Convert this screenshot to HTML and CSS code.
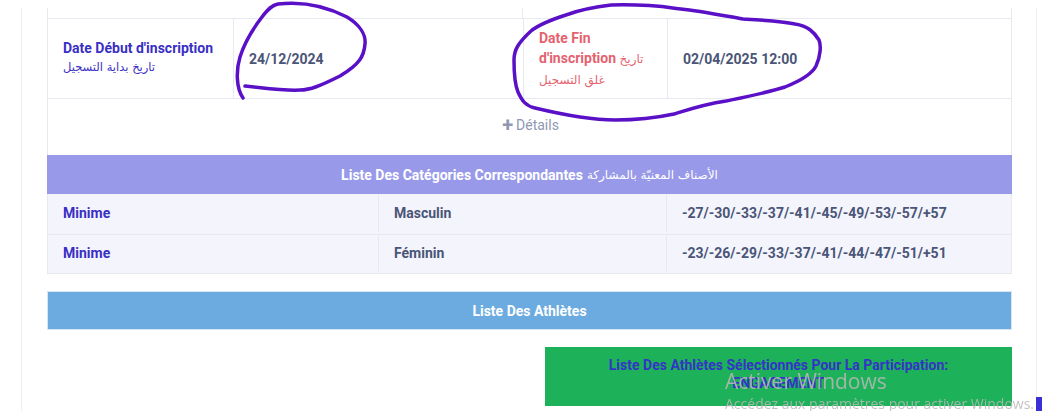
FILE: index.html
```html
<!DOCTYPE html>
<html lang="fr">
<head>
  <meta charset="UTF-8" />
  <meta name="viewport" content="width=device-width, initial-scale=1.0" />
  <title>Compétition - Inscription</title>
  <link rel="stylesheet" href="styles.css">
</head>
<body>
  <div class="card">

    <div class="info">
      <div class="info-top">
        <div></div><div></div>
      </div>
      <div class="info-row">
        <div class="cell label">
          Date Début d'inscription
          <span class="ar">تاريخ بداية التسجيل</span>
        </div>
        <div class="cell value">24/12/2024</div>
        <div class="cell label end">
          Date Fin d'inscription <span class="ar-inline">تاريخ غلق التسجيل</span>
        </div>
        <div class="cell value">02/04/2025 12:00</div>
      </div>
      <div class="details">
        <span class="plus">+</span> Détails
      </div>
    </div>

    <div class="band band-purple">
      Liste Des Catégories Correspondantes <span class="ar-head">الأصناف المعنيّة بالمشاركة</span>
    </div>
    <div class="cats">
      <div class="cat-row">
        <div class="cell cat-name">Minime</div>
        <div class="cell value">Masculin</div>
        <div class="cell value">-27/-30/-33/-37/-41/-45/-49/-53/-57/+57</div>
      </div>
      <div class="cat-row">
        <div class="cell cat-name">Minime</div>
        <div class="cell value">Féminin</div>
        <div class="cell value">-23/-26/-29/-33/-37/-41/-44/-47/-51/+51</div>
      </div>
    </div>

    <div class="band band-blue">Liste Des Athlètes</div>

    <div class="selected">
      Liste Des Athlètes Sélectionnés Pour La Participation:<br>
      ENGAGEMENT
    </div>
  </div>

  <!-- annotations drawn over the page -->
  <svg class="marks" width="1042" height="411" viewBox="0 0 1042 411">
    <path d="M243 98 C236 88 236 70 240 57 C244 44 252 30 262 17 C268 9 272 5 278 4 C295 2 320 3 347 17 C360 25 366 35 365 44 C364 56 360 64 340 76 C320 86 310 90 300 90 C285 91 265 88 245 86" />
    <path d="M611 5 C595 7 580 10 569 14 C550 20 538 25 531 31 C518 43 514 50 514 60 C514 75 515 85 518 92 C522 101 526 106 535 108 C560 114 590 120 615 120 C640 120 660 117 674 114 C690 109 705 104 726 101 C750 96 770 92 785 87 C800 81 812 74 816 66 C821 55 821 45 819 40 C814 32 808 26 795 24 C780 21 760 20 743 19 C720 15 700 11 681 9 C665 7 650 4 611 5" />
  </svg>

  <div class="watermark">
    <div class="wm-title">Activer Windows</div>
    <div class="wm-sub">Accédez aux paramètres pour activer Windows.</div>
  </div>
  <div class="to-top"></div>
</body>
</html>
```

FILE: styles.css
```css
* { box-sizing: border-box; }
body {
  margin: 0;
  background: #fff;
  font-family: Roboto, "DejaVu Sans", sans-serif;
  font-size: 14px;
  overflow: hidden;
}
.card {
  margin: 8px 5px 0 21px;
  padding: 0 24px 0 25px;
  border-left: 1px solid #eceef4;
  border-right: 1px solid #eceef4;
  min-height: 420px;
}
.info {
  border-left: 1px solid #e7e9f1;
  border-right: 1px solid #e7e9f1;
}
.info-top {
  display: grid;
  grid-template-columns: 475px 1fr;
  height: 11px;
  border-bottom: 1px solid #e7e9f1;
}
.info-top div:first-child {
  border-right: 1px solid #e7e9f1;
}
.info-row {
  display: grid;
  grid-template-columns: 185px 290px 144px 1fr;
  height: 80px;
  border-bottom: 1px solid #e7e9f1;
}
.cell {
  display: flex;
  flex-direction: column;
  justify-content: center;
  padding: 0 15px;
  font-weight: 700;
}
.info-row .cell + .cell,
.cat-row .cell + .cell {
  border-left: 1px solid #e7e9f1;
}
.label {
  color: #3a2fc4;
  line-height: 20px;
  padding-bottom: 4px;
}
.label .ar {
  font-family: "DejaVu Sans", sans-serif;
  font-weight: 400;
  font-size: 11.5px;
  line-height: 18px;
  direction: rtl;
  align-self: flex-start;
}
.label.end {
  display: block;
  padding-top: 9px;
  color: #e5626f;
}
.ar-inline {
  font-family: "DejaVu Sans", sans-serif;
  font-weight: 400;
  font-size: 12px;
}
.value {
  color: #4a5577;
}
.details {
  height: 56px;
  display: flex;
  align-items: center;
  justify-content: center;
  padding: 0 0 5px 2px;
  color: #8f97b2;
  font-size: 14px;
}
.plus {
  font-size: 20px;
  font-weight: 700;
  margin-right: 3px;
  line-height: 1;
  color: #8f97b2;
}
.band {
  height: 39px;
  display: flex;
  align-items: center;
  justify-content: center;
  color: #fff;
  font-weight: 700;
}
.band-purple {
  background: #9899e9;
}
.ar-head {
  font-family: "DejaVu Sans", sans-serif;
  font-weight: 400;
  font-size: 12px;
  margin-left: 4px;
}
.cats {
  background: #f3f4fc;
  border: 1px solid #e7e9f1;
  border-top: none;
}
.cat-row {
  display: grid;
  grid-template-columns: 330px 288px 1fr;
  height: 40px;
  padding-bottom: 2px;
}
.cat-row + .cat-row {
  border-top: 1px solid #e7e9f1;
  height: 39px;
}
.cat-name {
  color: #3a2fc4;
}
.band-blue {
  margin-top: 17px;
  background: #6cabe0;
  border: 1px solid #d7e6f4;
}
.selected {
  margin: 17px 0 0 auto;
  width: 467px;
  height: 59px;
  padding-top: 9px;
  background: #1db15a;
  color: #3434c6;
  font-weight: 700;
  text-align: center;
  line-height: 18px;
}
.marks {
  position: absolute;
  left: 0;
  top: 0;
  pointer-events: none;
}
.marks path {
  fill: none;
  stroke: #5a10c6;
  stroke-width: 3.5;
  stroke-linecap: round;
  stroke-linejoin: round;
}
.watermark {
  position: fixed;
  left: 725px;
  top: 367px;
  color: rgba(185, 185, 185, 0.85);
  font-family: "Open Sans", sans-serif;
  white-space: nowrap;
  pointer-events: none;
}
.wm-title {
  font-size: 21px;
  line-height: 28px;
}
.wm-sub {
  font-size: 14px;
  line-height: 18px;
}
.to-top {
  position: fixed;
  right: 0;
  top: 397px;
  width: 6px;
  height: 14px;
  background: #3b2fd6;
}
```
